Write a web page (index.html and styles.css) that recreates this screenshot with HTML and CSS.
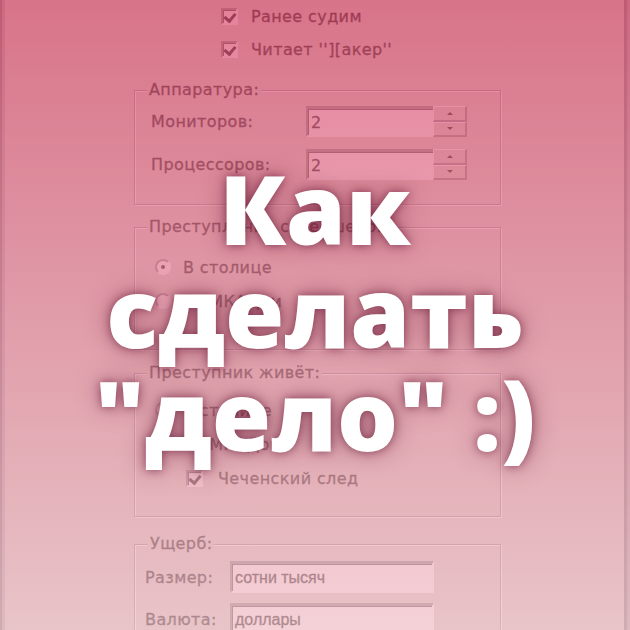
FILE: index.html
```html
<!DOCTYPE html>
<html lang="ru">
<head>
    <meta charset="UTF-8">
    <title>Как сделать "дело" :)</title>
    <link rel="stylesheet" href="styles.css">
</head>
<body>
    <div class="window">
        <div class="dialog">
            <div class="checks">
                <div class="check"><span class="box on"></span>Ранее судим</div>
                <div class="check"><span class="box on"></span>Читает ''][акер''</div>
            </div>

            <fieldset class="group hardware">
                <legend>Аппаратура:</legend>
                <div class="rows">
                    <div class="field">
                        <span class="lbl">Мониторов:</span>
                        <span class="spin">
                            <span class="edit">2</span>
                            <span class="arrows"><span class="up"></span><span class="down"></span></span>
                        </span>
                    </div>
                    <div class="field">
                        <span class="lbl">Процессоров:</span>
                        <span class="spin">
                            <span class="edit">2</span>
                            <span class="arrows"><span class="up"></span><span class="down"></span></span>
                        </span>
                    </div>
                </div>
            </fieldset>

            <fieldset class="group place">
                <legend>Преступление совершено:</legend>
                <div class="option"><span class="radio on"></span>В столице</div>
                <div class="option"><span class="radio"></span>За МКАДом</div>
            </fieldset>

            <fieldset class="group home">
                <legend>Преступник живёт:</legend>
                <div class="option"><span class="radio"></span>В столице</div>
                <div class="option"><span class="radio on"></span>За МКАДом</div>
                <div class="option sub"><span class="box on"></span>Чеченский след</div>
            </fieldset>

            <fieldset class="group damage">
                <legend>Ущерб:</legend>
                <div class="rows">
                    <div class="field">
                        <span class="lbl">Размер:</span>
                        <span class="edit text">сотни тысяч</span>
                    </div>
                    <div class="field">
                        <span class="lbl">Валюта:</span>
                        <span class="edit text">доллары</span>
                    </div>
                </div>
            </fieldset>
        </div>

        <!-- розовая заливка поверх окна -->
        <div class="tint"></div>

        <div class="headline">
            <h1>Как<br>сделать<br>"дело" :)</h1>
        </div>
    </div>
</body>
</html>
```

FILE: styles.css
```css
* { box-sizing: border-box; }

body {
    margin: 0;
    background-color: #d4d0c8;
}

.window {
    position: relative;
    width: 630px;
    height: 630px;
    overflow: hidden;
    background-color: #d4d0c8;
    box-shadow: inset 2px 0 #7a7a7a, inset 5px 0 #aaaaaa,
                inset -3px 0 #aaaaaa, inset -6px 0 #7a7a7a;
    font-family: "DejaVu Sans", sans-serif;
    font-size: 16px;
    letter-spacing: 0.4px;
    color: #000;
    -webkit-text-stroke: 0.35px #000;
}

.dialog {
    margin-left: 134px;
    width: 367px;
    display: flex;
    flex-direction: column;
}

/* --- флажки и переключатели --- */
.checks {
    padding-left: 87px;
    display: flex;
    flex-direction: column;
}

.check {
    display: flex;
    align-items: center;
    gap: 13px;
    height: 33px;
}

.box {
    position: relative;
    width: 17px;
    height: 17px;
    flex: none;
    background-color: #fff;
    border-style: solid;
    border-width: 2px;
    border-color: #808080 #fff #fff #808080;
    box-shadow: inset 1px 1px #404040;
}

.box.on::after {
    content: "";
    position: absolute;
    left: 3px;
    top: 1px;
    width: 5px;
    height: 8px;
    border-right: 3px solid #000;
    border-bottom: 3px solid #000;
    transform: rotate(40deg);
}

.radio {
    position: relative;
    width: 16px;
    height: 16px;
    flex: none;
    border-radius: 50%;
    background-color: #fff;
    border: 2px solid;
    border-color: #808080 #fff #fff #808080;
}

.radio.on::after {
    content: "";
    position: absolute;
    left: 4px;
    top: 4px;
    width: 4px;
    height: 4px;
    border-radius: 50%;
    background-color: #000;
}

/* --- рамки групп --- */
.group {
    margin: 0;
    min-width: 0;
    padding: 0 16px;
    border: 1px solid #8c8c8c;
    box-shadow: inset 1px 1px #fff, 1px 1px #fff;
}

.group legend {
    padding: 0 2px;
    margin-left: -4px;
    line-height: 20px;
    background-color: #d4d0c8;
}

.hardware { margin-top: 14px; padding-top: 6px; padding-bottom: 24px; }
.place { margin-top: 12px; padding-top: 13px; padding-bottom: 31px; }
.home { margin-top: 13px; padding-top: 10px; padding-bottom: 21px; }
.damage { margin-top: 17px; padding: 7px 16px 20px 10px; }
.damage legend { margin-left: 3px; }

.rows {
    display: flex;
    flex-direction: column;
    gap: 12px;
}

.damage .rows { gap: 10px; }

.field {
    display: flex;
    align-items: center;
    height: 31px;
}

.field .lbl { width: 155px; }
.damage .field { height: 32px; }
.damage .field .lbl { width: 85px; }

.option {
    display: flex;
    align-items: center;
    gap: 12px;
    height: 34px;
    padding-left: 4px;
}

.option.sub {
    padding-left: 35px;
    gap: 15px;
}

/* --- поля ввода --- */
.spin {
    display: flex;
    height: 31px;
}

.edit {
    display: flex;
    align-items: center;
    width: 127px;
    height: 31px;
    padding-left: 3px;
    background-color: #fff;
    border-style: solid;
    border-width: 3px 0 2px 2px;
    border-color: #808080 #fff #fff #808080;
    box-shadow: inset 1px 1px #404040;
}

.edit.text {
    width: 204px;
    height: 32px;
    border-right-width: 2px;
    font-family: "Liberation Sans", sans-serif;
    font-size: 16px;
    letter-spacing: 0;
}

.arrows {
    display: flex;
    flex-direction: column;
    width: 34px;
}

.arrows span {
    flex: 1;
    display: flex;
    align-items: center;
    justify-content: center;
    background-color: #d4d0c8;
    border-style: solid;
    border-width: 1px 2px 2px 1px;
    border-color: #fff #808080 #808080 #fff;
}

.arrows span::after {
    content: "";
    border-left: 3px solid transparent;
    border-right: 3px solid transparent;
}

.arrows .up::after { border-bottom: 3px solid #000; }
.arrows .down::after { border-top: 3px solid #000; }

/* --- заливка и заголовок поверх --- */
.tint {
    position: absolute;
    inset: 0;
    background: linear-gradient(to bottom, rgba(218, 80, 114, 0.72), rgba(240, 192, 200, 0.72));
}

.headline {
    position: absolute;
    inset: 0;
    display: flex;
    align-items: center;
    justify-content: center;
    padding-bottom: 9px;
}

.headline h1 {
    margin: 0;
    text-align: center;
    font-family: "Open Sans", sans-serif;
    font-weight: 800;
    font-size: 96px;
    line-height: 103px;
    letter-spacing: 0;
    color: #fff;
    -webkit-text-stroke: 0;
    text-shadow: 0 0 10px rgba(90, 10, 40, 0.6), 0 0 26px rgba(90, 10, 40, 0.4);
}
```
